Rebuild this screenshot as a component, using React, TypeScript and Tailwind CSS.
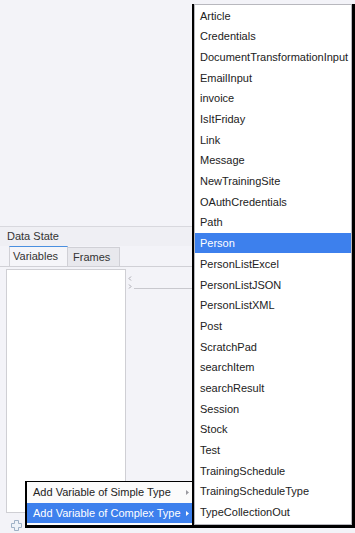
import React from "react";

const types = [
  "Article",
  "Credentials",
  "DocumentTransformationInput",
  "EmailInput",
  "invoice",
  "IsItFriday",
  "Link",
  "Message",
  "NewTrainingSite",
  "OAuthCredentials",
  "Path",
  "Person",
  "PersonListExcel",
  "PersonListJSON",
  "PersonListXML",
  "Post",
  "ScratchPad",
  "searchItem",
  "searchResult",
  "Session",
  "Stock",
  "Test",
  "TrainingSchedule",
  "TrainingScheduleType",
  "TypeCollectionOut",
];

export default function App() {
  return (
    <div className="relative w-[355px] h-[533px] overflow-hidden bg-[#f3f3f8] text-[11px] text-[#222] font-['Liberation_Sans',Arial,sans-serif]">
      {/* upper empty area */}
      <div className="h-[226px]" />
      {/* Data State panel */}
      <div className="border-t border-[#d8d8de] h-[20px] bg-[#efeff4] pl-[7px] flex items-center text-[#333]">
        Data State
      </div>
      <div className="flex items-end pl-[9px] h-[21px] border-b border-[#d0d0d6]">
        <div className="h-[20px] w-[59px] border-t border-t-[#4a8fe0] border-x border-[#d0d0d6] bg-[#f5f5f9] pl-[3px] flex items-center text-[#333]">
          Variables
        </div>
        <div className="h-[19px] w-[52px] border-t border-r border-[#d0d0d6] bg-[#e8e8ed] pl-[5px] flex items-center text-[#333]">
          Frames
        </div>
      </div>
      <div className="flex">
        <div className="ml-[6px] mt-[2px] w-[120px] h-[244px] bg-white border border-[#cfcfd4]" />
        <div className="flex flex-col pl-[1px] pt-[9px]">
          <svg width="4" height="5" viewBox="0 0 4 5" className="ml-[1px]">
            <path d="M3 0.5 L1 2.5 L3 4.5" stroke="#a8a8b0" fill="none" strokeWidth="1" />
          </svg>
          <div className="flex items-center mt-[3px]">
            <svg width="4" height="5" viewBox="0 0 4 5" className="ml-[1px]">
              <path d="M1 0.5 L3 2.5 L1 4.5" stroke="#a8a8b0" fill="none" strokeWidth="1" />
            </svg>
            <div className="ml-[2px] mt-[3px] w-[70px] h-px bg-[#c8c8ce]" />
          </div>
        </div>
      </div>
      <div className="pl-[11px] pt-[7px]">
        <svg width="11" height="11" viewBox="0 0 11 11">
          <path
            d="M3.5 0.5 H7.5 V3.5 H10.5 V7.5 H7.5 V10.5 H3.5 V7.5 H0.5 V3.5 H3.5 Z"
            fill="#eef2f8"
            stroke="#9fb1c6"
            strokeWidth="1"
          />
        </svg>
      </div>

      {/* submenu */}
      <div className="absolute left-[25px] top-[481px] w-[168px] h-[47px] bg-black pl-[2px] pt-[1px] pb-[3px]">
        <div className="bg-[#fbfbfb] h-full flex flex-col">
          <div className="h-[21px] flex items-center pl-[6px] pr-[4px] text-[#222]">
            <span className="flex-1">Add Variable of Simple Type</span>
            <svg width="3" height="5" viewBox="0 0 3 5">
              <path d="M0 0 L3 2.5 L0 5 Z" fill="#9a9aa0" />
            </svg>
          </div>
          <div className="h-[20px] flex items-center pl-[6px] pr-[4px] bg-[#3d80ed] text-white">
            <span className="flex-1">Add Variable of Complex Type</span>
            <svg width="3" height="5" viewBox="0 0 3 5">
              <path d="M0 0 L3 2.5 L0 5 Z" fill="#ffffff" />
            </svg>
          </div>
        </div>
      </div>

      {/* main popup menu */}
      <div className="absolute left-[192px] top-[4px] w-[163px] h-[524px] bg-black pl-[2px] pr-[3px] pb-[3px]">
        <div className="bg-white h-full border border-[#b8b8be] flex flex-col">
          {types.map((t) => (
            <div
              key={t}
              className={
                t === "Person"
                  ? "h-[20.7px] shrink-0 flex items-center pl-[5px] pt-[1px] bg-[#3d80ed] text-white"
                  : "h-[20.7px] shrink-0 flex items-center pl-[5px] pt-[1px] text-[#222]"
              }
            >
              {t}
            </div>
          ))}
        </div>
      </div>
    </div>
  );
}
